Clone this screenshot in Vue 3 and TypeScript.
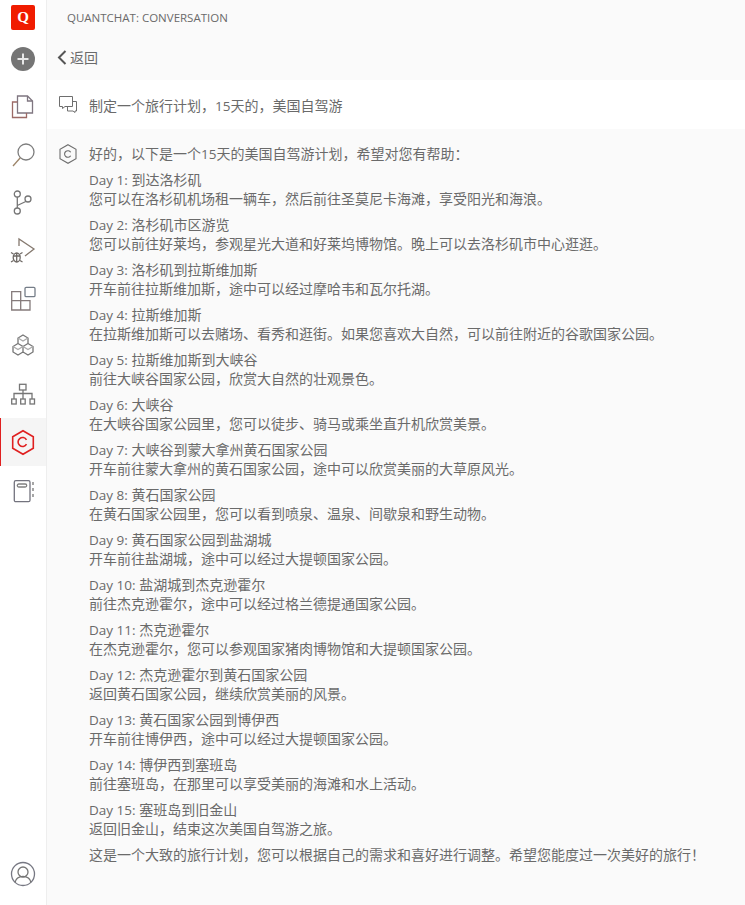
<template>
  <div class="page">
    <aside class="sidebar">
      <div class="logo">Q</div>
      <button class="add">
        <svg width="24" height="24" viewBox="0 0 24 24">
          <circle cx="12" cy="12" r="12" fill="#757575" />
          <path d="M12 6.500v11M6.500 12h11" stroke="#e8e8e8" stroke-width="2" />
        </svg>
      </button>
      <nav class="nav">
        <a class="nav-item">
          <svg class="icon" viewBox="0 0 24 24">
            <path d="M6.500 2h10l5 5v12h-15z" stroke="#7f7680" />
            <path d="M16.500 2v5h5" stroke="#7f7680" />
            <path d="M6.500 8h-5v15.500h14v-4.500" stroke="#9c6a66" />
          </svg>
        </a>
        <a class="nav-item">
          <svg class="icon" viewBox="0 0 24 24">
            <circle cx="15" cy="10" r="8" stroke="#7d7d7d" />
            <path d="M9.300 15.700l-7.300 8.300" stroke="#9c8468" />
          </svg>
        </a>
        <a class="nav-item">
          <svg class="icon" viewBox="0 0 24 24">
            <circle cx="6.300" cy="4" r="3" />
            <circle cx="6.300" cy="21" r="3" />
            <circle cx="17" cy="9" r="3" />
            <path d="M6.300 7v11M6.300 15.500l8.500-4" />
          </svg>
        </a>
        <a class="nav-item">
          <svg class="icon" viewBox="0 0 24 24">
            <path d="M8 8v-7l15 10-9 7" stroke="#85796f" />
            <ellipse cx="5.700" cy="19.500" rx="3.500" ry="4.500" stroke="#6f6a66" />
            <path d="M2.200 18h7M5.700 15v9M0 14.500l2.500 1.500M11.500 14.500l-2.500 1.500M0 24l2.500-1.500M11.500 24l-2.500-1.500" stroke="#6f6a66" />
          </svg>
        </a>
        <a class="nav-item">
          <svg class="icon" viewBox="0 0 24 24">
            <path d="M.7 5.700h9v18.300h-9zM.7 14.700h18.300v9.300h-18.300zM9.700 14.700v9.300" stroke="#857b7b" />
            <rect x="14" y="1.300" width="10" height="9.400" rx="1.200" stroke="#757d88" />
          </svg>
        </a>
        <a class="nav-item">
          <svg class="icon" viewBox="0 0 24 24">
            <path d="M12 1l5 3v5.500l-5 3-5-3v-5.500zM7 9.500l5 3v5.500l-5 3-5-3v-5.500zM17 9.500l5 3v5.500l-5 3-5-3v-5.500z" />
            <path d="M7 4l5 3 5-3M2 12.500l5 3 5-3 5 3 5-3" stroke="#aaa" />
          </svg>
        </a>
        <a class="nav-item">
          <svg class="icon" viewBox="0 0 24 24">
            <rect x="8.500" y="2.300" width="6.500" height="5.700" />
            <rect x=".7" y="17" width="4.500" height="5" />
            <rect x="9.700" y="17" width="4.500" height="5" />
            <rect x="19" y="17" width="4.500" height="5" />
            <path d="M12 8v9M3 17v-5.500h18v5.500" />
          </svg>
        </a>
        <a class="nav-item active">
          <svg class="icon" viewBox="0 0 24 24">
            <path d="M12 .7l10.300 6v11.600l-10.300 6-10.300-6v-11.600z" stroke="#e02020" stroke-width="1.600" />
            <path d="M15.500 9.800a4.500 4.500 0 1 0 0 4.400" stroke="#e02020" stroke-width="1.600" />
          </svg>
        </a>
        <a class="nav-item">
          <svg class="icon" viewBox="0 0 24 24">
            <rect x="3.300" y="2.700" width="15.700" height="21" rx="1.500" stroke="#73737e" />
            <rect x="6.300" y="6" width="9.400" height="3" rx="1.500" stroke="#808080" />
            <path d="M22 4v3M22 10v3M22 16v3" stroke="#808080" stroke-width="1.400" />
          </svg>
        </a>
      </nav>
      <a class="nav-item account">
        <svg class="icon" viewBox="0 0 24 24">
          <circle cx="12" cy="12" r="11.500" stroke="#767782" />
          <circle cx="12" cy="10" r="5" />
          <path d="M4 20.500c.8-3.800 3.800-6 8-6s7.200 2.200 8 6" />
        </svg>
      </a>
    </aside>

    <main class="main">
      <header class="title">QUANTCHAT: CONVERSATION</header>
      <div class="back">
        <svg width="10" height="15" viewBox="0 0 10 15">
          <path d="M8.500 1L2 7.500l6.500 6.500" fill="none" stroke="#555" stroke-width="2" />
        </svg>
        <span>返回</span>
      </div>

      <section class="row question">
        <svg class="row-icon" width="18" height="17" viewBox="0 0 18 17">
          <path d="M.5.500h13v10h-7.500l-2.500 2v-2h-3z" fill="none" stroke="#6e6e6e" />
          <path d="M13.500 5.500h4v9.500h-1.500v1.500l-2-1.500h-5.500v-4.500" fill="none" stroke="#6e6e6e" />
        </svg>
        <p>制定一个旅行计划，<span class="latin">15</span>天的，美国自驾游</p>
      </section>

      <section class="row answer">
        <svg class="row-icon" width="18" height="20" viewBox="0 0 18 20">
          <path d="M9 .7l8 4.600v9.400l-8 4.600-8-4.600v-9.400z" fill="none" stroke="#6e6e6e" stroke-width="1.100" />
          <path d="M11.700 8.300a3.300 3.300 0 1 0 0 3.400" fill="none" stroke="#6e6e6e" stroke-width="1.100" />
        </svg>
        <div class="answer-body">
          <p>好的，以下是一个<span class="latin">15</span>天的美国自驾游计划，希望对您有帮助：</p>
          <p v-for="day in days" :key="day.label">
            <span class="latin">{{ day.label }}</span> {{ day.title }}<br />{{ day.text }}
          </p>
          <p>这是一个大致的旅行计划，您可以根据自己的需求和喜好进行调整。希望您能度过一次美好的旅行！</p>
        </div>
      </section>
    </main>
  </div>
</template>

<script setup lang="ts">
interface Day {
  label: string
  title: string
  text: string
}

const days: Day[] = [
  { label: 'Day 1:', title: '到达洛杉矶', text: '您可以在洛杉矶机场租一辆车，然后前往圣莫尼卡海滩，享受阳光和海浪。' },
  { label: 'Day 2:', title: '洛杉矶市区游览', text: '您可以前往好莱坞，参观星光大道和好莱坞博物馆。晚上可以去洛杉矶市中心逛逛。' },
  { label: 'Day 3:', title: '洛杉矶到拉斯维加斯', text: '开车前往拉斯维加斯，途中可以经过摩哈韦和瓦尔托湖。' },
  { label: 'Day 4:', title: '拉斯维加斯', text: '在拉斯维加斯可以去赌场、看秀和逛街。如果您喜欢大自然，可以前往附近的谷歌国家公园。' },
  { label: 'Day 5:', title: '拉斯维加斯到大峡谷', text: '前往大峡谷国家公园，欣赏大自然的壮观景色。' },
  { label: 'Day 6:', title: '大峡谷', text: '在大峡谷国家公园里，您可以徒步、骑马或乘坐直升机欣赏美景。' },
  { label: 'Day 7:', title: '大峡谷到蒙大拿州黄石国家公园', text: '开车前往蒙大拿州的黄石国家公园，途中可以欣赏美丽的大草原风光。' },
  { label: 'Day 8:', title: '黄石国家公园', text: '在黄石国家公园里，您可以看到喷泉、温泉、间歇泉和野生动物。' },
  { label: 'Day 9:', title: '黄石国家公园到盐湖城', text: '开车前往盐湖城，途中可以经过大提顿国家公园。' },
  { label: 'Day 10:', title: '盐湖城到杰克逊霍尔', text: '前往杰克逊霍尔，途中可以经过格兰德提通国家公园。' },
  { label: 'Day 11:', title: '杰克逊霍尔', text: '在杰克逊霍尔，您可以参观国家猪肉博物馆和大提顿国家公园。' },
  { label: 'Day 12:', title: '杰克逊霍尔到黄石国家公园', text: '返回黄石国家公园，继续欣赏美丽的风景。' },
  { label: 'Day 13:', title: '黄石国家公园到博伊西', text: '开车前往博伊西，途中可以经过大提顿国家公园。' },
  { label: 'Day 14:', title: '博伊西到塞班岛', text: '前往塞班岛，在那里可以享受美丽的海滩和水上活动。' },
  { label: 'Day 15:', title: '塞班岛到旧金山', text: '返回旧金山，结束这次美国自驾游之旅。' }
]
</script>

<style>
html,
body {
  margin: 0;
  height: 100%;
  background: #fff;
}
#app {
  height: 100%;
}
</style>

<style scoped>
.page {
  display: flex;
  height: 905px;
  overflow: hidden;
  font-family: 'Open Sans', 'Noto Sans CJK SC', sans-serif;
  font-size: 14px;
  color: #6a6a6a;
}

.latin {
  font-size: 13.500px;
  line-height: 1;
}

.sidebar {
  width: 46px;
  flex: none;
  display: flex;
  flex-direction: column;
  background: #fff;
  border-right: 1px solid #eee;
}

.logo {
  width: 24px;
  height: 25px;
  margin: 5px 0 0 11px;
  border-radius: 2px;
  background: #f01c00;
  color: #fff;
  font-family: 'Liberation Serif', serif;
  font-size: 15px;
  font-weight: 700;
  line-height: 25px;
  text-align: center;
}

.add {
  display: block;
  width: 24px;
  height: 24px;
  margin: 17px 0 0 11px;
  padding: 0;
  border: 0;
  background: none;
}

.add svg {
  display: block;
}

.nav {
  margin-top: 11px;
  display: flex;
  flex-direction: column;
}

.nav-item {
  height: 48px;
  display: flex;
  align-items: center;
  justify-content: center;
  box-sizing: border-box;
}

.nav-item.active {
  background: #f5f5f5;
  border-left: 1px solid #e02020;
  padding-right: 1px;
}

.account {
  margin-top: auto;
  margin-bottom: 7px;
}

.icon {
  width: 24px;
  height: 24px;
  fill: none;
  stroke: #767676;
  stroke-width: 1.3;
  overflow: visible;
}

.main {
  flex: 1;
  min-width: 0;
  background: #fafafa;
}

.title {
  height: 34px;
  padding-left: 20px;
  font-size: 11.500px;
  line-height: 35px;
}

.back {
  height: 46px;
  padding-left: 10px;
  display: flex;
  align-items: center;
  gap: 3px;
  line-height: 48px;
}

.back span {
  padding-top: 1px;
}

.row {
  display: flex;
  padding-left: 12px;
}

.row p {
  margin: 0;
}

.row-icon {
  flex: none;
}

.question {
  height: 49px;
  align-items: center;
  gap: 12px;
  background: #fff;
}

.answer {
  padding-top: 15px;
  gap: 12px;
}

.answer-body {
  line-height: 19px;
  white-space: nowrap;
}

.answer-body p + p {
  margin-top: 7px;
}
</style>
